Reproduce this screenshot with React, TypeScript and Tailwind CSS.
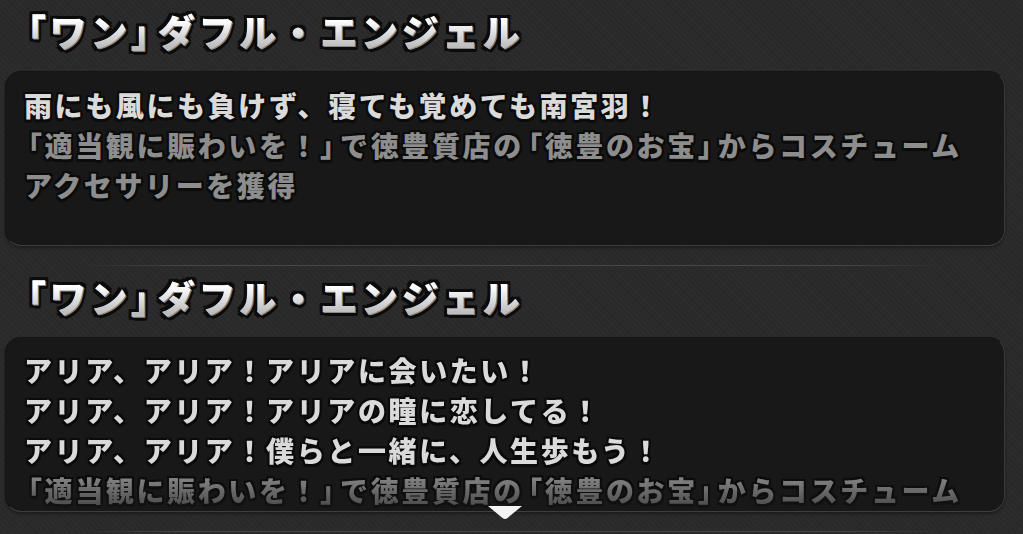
const OUTLINE =
  '[text-shadow:2px_0_0_#0b0b0b,-2px_0_0_#0b0b0b,0_2px_0_#0b0b0b,0_-2px_0_#0b0b0b,2px_2px_0_#0b0b0b,-2px_-2px_0_#0b0b0b,2px_-2px_0_#0b0b0b,-2px_2px_0_#0b0b0b,1px_3px_0_#0b0b0b,-1px_3px_0_#0b0b0b]';

type Line = { text: string; dim?: boolean };

type Entry = {
  title: string;
  lines: Line[];
  more?: boolean;
};

const ENTRIES: Entry[] = [
  {
    title: '「ワン」ダフル・エンジェル',
    lines: [
      { text: '雨にも風にも負けず、寝ても覚めても南宮羽！' },
      { text: '「適当観に賑わいを！」で徳豊質店の「徳豊のお宝」からコスチューム', dim: true },
      { text: 'アクセサリーを獲得', dim: true },
    ],
  },
  {
    title: '「ワン」ダフル・エンジェル',
    lines: [
      { text: 'アリア、アリア！アリアに会いたい！' },
      { text: 'アリア、アリア！アリアの瞳に恋してる！' },
      { text: 'アリア、アリア！僕らと一緒に、人生歩もう！' },
      { text: '「適当観に賑わいを！」で徳豊質店の「徳豊のお宝」からコスチューム', dim: true },
    ],
    more: true,
  },
];

// the game font sets its corner brackets narrower than a full em
function tightBrackets(text: string) {
  const chars = Array.from(text);
  return chars.map((ch, i) => {
    if (ch === '「' && i === 0) return <span key={i} className="-ml-[10px]">「</span>;
    if (ch === '」') return <span key={i} className="tracking-[-8px]">」</span>;
    if (chars[i + 1] === '「') return <span key={i} className="tracking-[-7px]">{ch}</span>;
    return ch;
  });
}

function Title({ children }: { children: string }) {
  const [open, rest] = [children.slice(0, children.indexOf('」')), children.slice(children.indexOf('」') + 1)];
  const body = (
    <>
      {open}
      <span className="tracking-[-10px]">」</span>
      {rest}
    </>
  );
  return (
    <div className="relative h-[44px] pl-[9px] text-[37px] leading-[44px] font-black tracking-[3.6px] whitespace-nowrap">
      <span className="text-[#9c9c9c] [text-shadow:1px_1px_0_#8a8a8a,3px_0_0_#0b0b0b,-3px_0_0_#0b0b0b,0_3px_0_#0b0b0b,0_-3px_0_#0b0b0b,3px_3px_0_#0b0b0b,-3px_-3px_0_#0b0b0b,3px_-3px_0_#0b0b0b,-3px_3px_0_#0b0b0b,2px_4px_0_#0b0b0b]">
        {body}
      </span>
      <span
        aria-hidden
        className="absolute left-[9px] top-0 bg-[linear-gradient(to_bottom,#ffffff_25%,#bdbdbd_85%)] bg-clip-text text-transparent"
      >
        {body}
      </span>
    </div>
  );
}

function Chevron() {
  return (
    <svg width="36" height="15" viewBox="0 0 36 15" className="absolute left-1/2 -bottom-[9px] -translate-x-1/2">
      <path d="M1 1 H35 L20.5 13 Q18 15 15.5 13 Z" fill="#f4f4f4" />
    </svg>
  );
}

function Section({ entry }: { entry: Entry }) {
  return (
    <section className="relative h-[266px]">
      <div className="h-px mx-[80px] bg-[linear-gradient(90deg,transparent,#474747_12%,#474747_88%,transparent)]" />
      <div className="pt-[9px]">
        <Title>{entry.title}</Title>
      </div>
      <div className="relative mt-[18px] ml-[5px] w-[1000px] h-[175px] rounded-[16px] bg-[#181818] border border-[#141414] border-r-[#3a3a3a] border-b-[#3e3e3e] shadow-[0_2px_3px_rgba(0,0,0,0.35)]">
        <div
          className={
            entry.more
              ? 'h-full overflow-hidden rounded-[16px] pl-[18px] pt-[12px] [mask-image:linear-gradient(to_bottom,#000_78%,rgba(0,0,0,0.45)_97%)]'
              : 'h-full overflow-hidden rounded-[16px] pl-[18px] pt-[13px]'
          }
        >
          {entry.lines.map((line, i) => (
            <div
              key={i}
              className={`h-[40px] leading-[40px] text-[28px] font-black tracking-[2.6px] whitespace-nowrap ${OUTLINE} ${
                line.dim ? 'text-[#8d8d8d]' : 'text-[#dadada]'
              }`}
            >
              {tightBrackets(line.text)}
            </div>
          ))}
        </div>
        {entry.more && <Chevron />}
      </div>
    </section>
  );
}

export default function App() {
  return (
    <div className="h-[534px] w-full overflow-hidden bg-[#2a2a2a] bg-[repeating-linear-gradient(45deg,#2c2c2c_0_2px,#292929_2px_4px)] font-['Noto_Sans_CJK_JP','Noto_Sans',sans-serif]">
      <div className="-mt-px">
        {ENTRIES.map((entry, i) => (
          <Section key={i} entry={entry} />
        ))}
        <section className="h-[266px]">
          <div className="h-px mx-[80px] bg-[linear-gradient(90deg,transparent,#474747_12%,#474747_88%,transparent)]" />
        </section>
      </div>
    </div>
  );
}
